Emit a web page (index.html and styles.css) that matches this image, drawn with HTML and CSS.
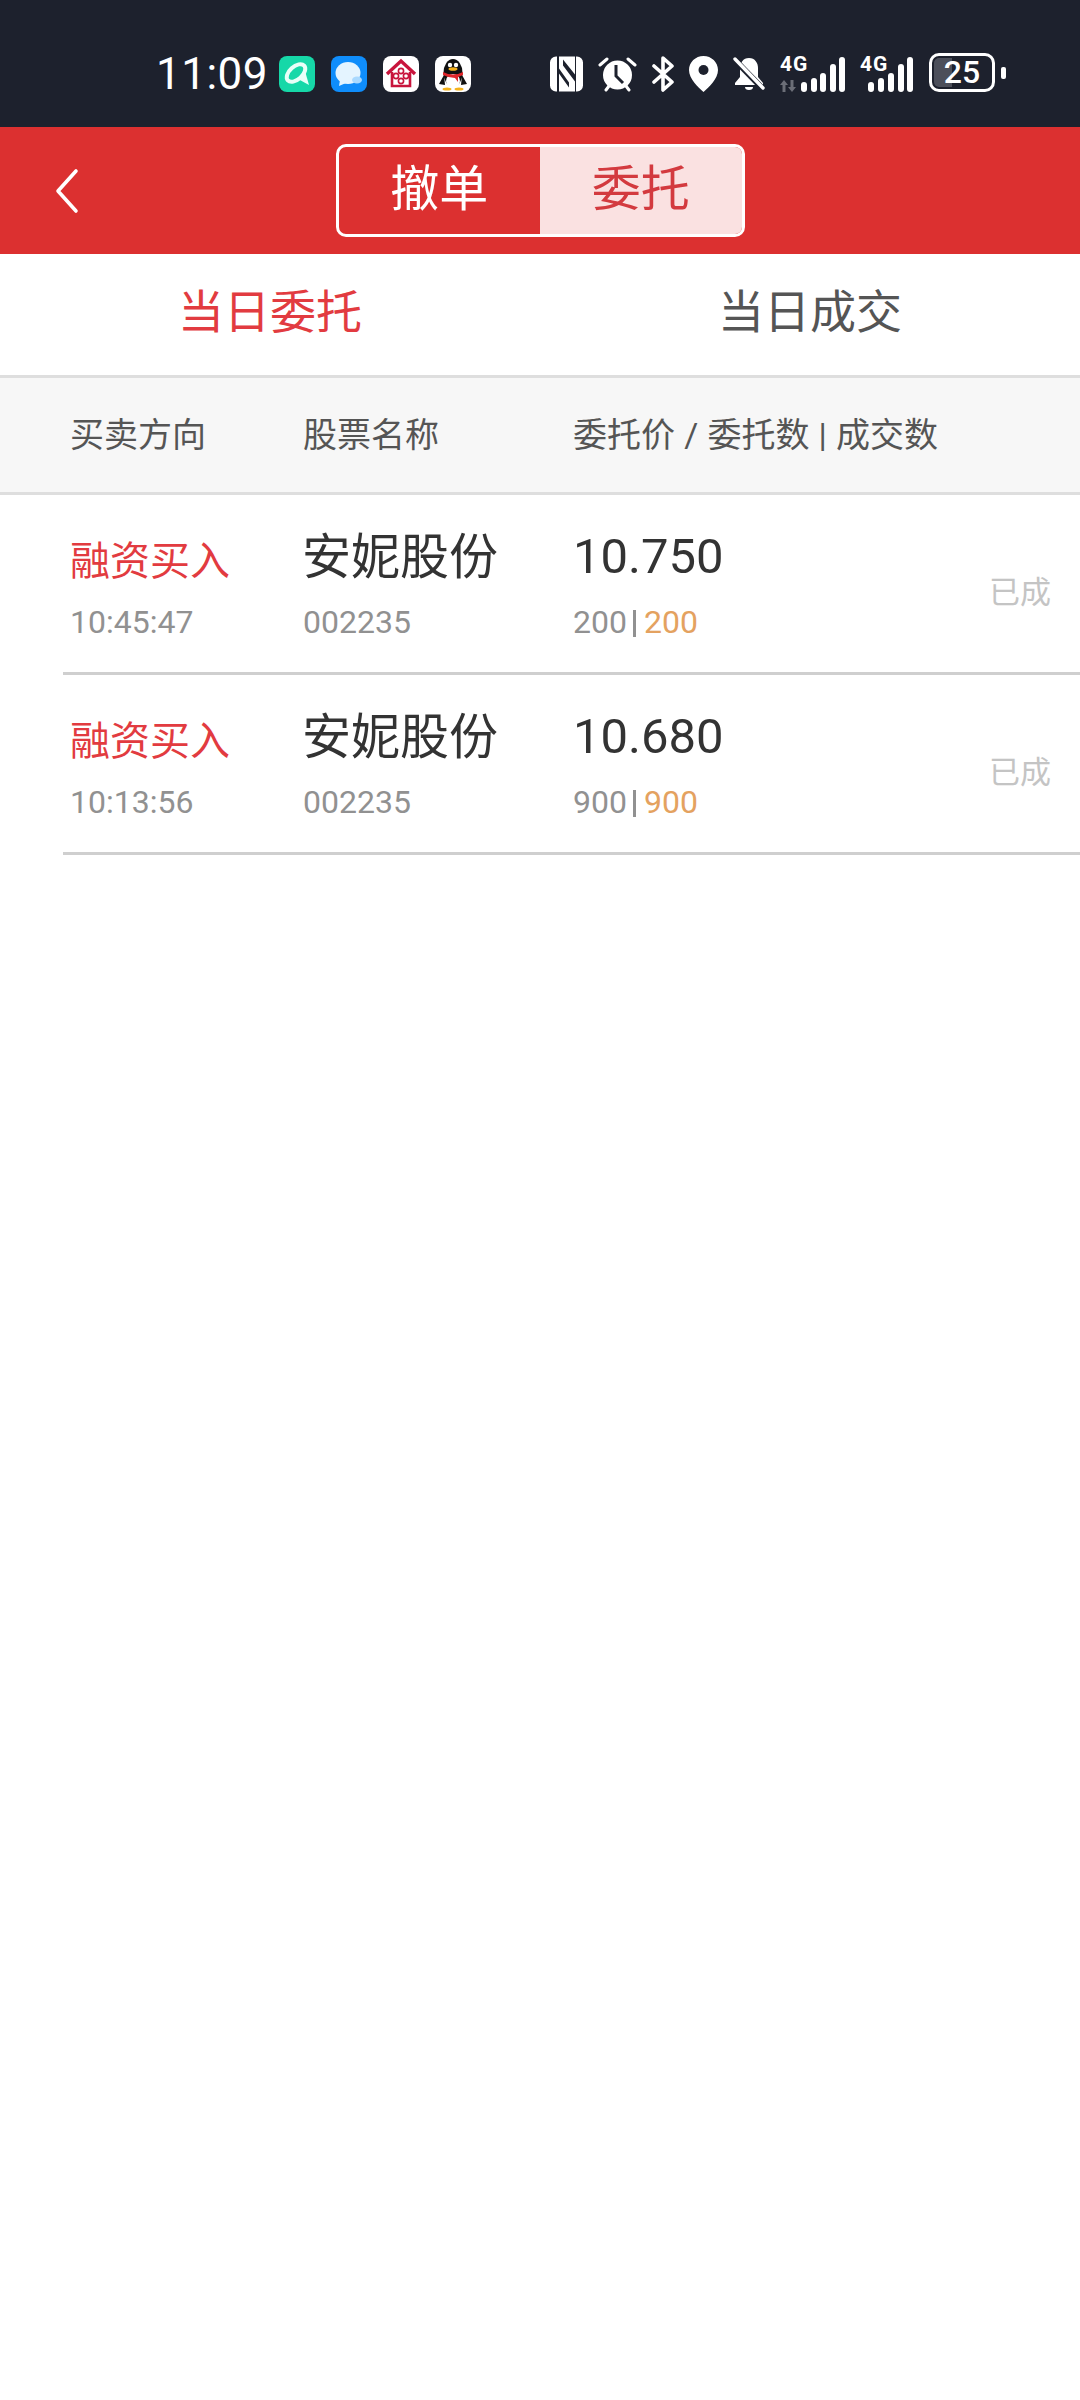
FILE: index.html
```html
<!DOCTYPE html>
<html lang="zh-CN">
<head>
  <meta charset="UTF-8" />
  <meta name="viewport" content="width=device-width, initial-scale=1.0"/>
  <title>委托</title>
  <link rel="stylesheet" href="styles.css">
</head>
<body>
  <!-- 状态栏 -->
  <div class="status-bar">
    <span class="clock">11:09</span>
    <div class="app-icons">
      <svg class="app-icon" viewBox="0 0 36 36">
        <rect width="36" height="36" rx="8" fill="#16d8a8"/>
        <ellipse cx="17" cy="17" rx="11" ry="6.500" fill="none" stroke="#e8fff8" stroke-width="4" transform="rotate(-42 17 17)"/>
        <path d="M19 23l7-8 4 14z" fill="#e8fff8"/>
      </svg>
      <svg class="app-icon" viewBox="0 0 36 36">
        <rect width="36" height="36" rx="8" fill="#0f8dfb"/>
        <ellipse cx="17" cy="17" rx="12.500" ry="11" fill="#e4f4ff"/>
        <path d="M9 24l-1 6 7-3z" fill="#e4f4ff"/>
        <ellipse cx="26" cy="24" rx="5" ry="3.500" fill="#a9d9ff"/>
      </svg>
      <svg class="app-icon" viewBox="0 0 36 36">
        <rect width="36" height="36" rx="8" fill="#fff"/>
        <path d="M4 18L18 5l14 13" fill="none" stroke="#c8143c" stroke-width="3.400"/>
        <path d="M9 16v14h18V16" fill="none" stroke="#c8143c" stroke-width="2.600"/>
        <circle cx="18" cy="15" r="2.600" fill="none" stroke="#c8143c" stroke-width="1.600"/>
        <circle cx="13" cy="20" r="2.600" fill="none" stroke="#c8143c" stroke-width="1.600"/>
        <circle cx="23" cy="20" r="2.600" fill="none" stroke="#c8143c" stroke-width="1.600"/>
        <circle cx="18" cy="25" r="2.600" fill="none" stroke="#c8143c" stroke-width="1.600"/>
      </svg>
      <svg class="app-icon" viewBox="0 0 36 36">
        <rect width="36" height="36" rx="8" fill="#fff"/>
        <ellipse cx="18" cy="17" rx="9.500" ry="14" fill="#111"/>
        <path d="M9 19l-5 9 6 1zM27 19l5 9-6 1z" fill="#111"/>
        <ellipse cx="18" cy="25" rx="7" ry="7" fill="#fff"/>
        <circle cx="15" cy="9" r="2.200" fill="#fff"/>
        <circle cx="21" cy="9" r="2.200" fill="#fff"/>
        <ellipse cx="18" cy="13" rx="4.500" ry="1.800" fill="#f5b21a"/>
        <path d="M8 16q10 5 20 0l0 3-5 2 0 5-3-4q-6 0-12-3z" fill="#e0262a"/>
        <ellipse cx="12" cy="33" rx="4.500" ry="1.600" fill="#f5b21a"/>
        <ellipse cx="24" cy="33" rx="4.500" ry="1.600" fill="#f5b21a"/>
      </svg>
    </div>
    <div class="sys-icons">
      <svg class="sys nfc" viewBox="0 0 33 35">
        <path d="M7 0v35H6a6 6 0 0 1-6-6V6a6 6 0 0 1 6-6zM26 0v35h1a6 6 0 0 0 6-6V6a6 6 0 0 0-6-6z" fill="#fff"/>
        <path d="M9 0h16v18L13 3v6l12 16v10H9V17l10 14v-5L9 12z" fill="#fff"/>
      </svg>
      <svg class="sys alarm" viewBox="0 0 39 36">
        <circle cx="19.500" cy="19" r="14.500" fill="#fff"/>
        <path d="M18 9v11l7 7" fill="none" stroke="#1d212d" stroke-width="3"/>
        <path d="M2 9l7-6M37 9l-7-6M8 34l3-4M31 34l-3-4" stroke="#fff" stroke-width="3" stroke-linecap="round"/>
      </svg>
      <svg class="sys bt" viewBox="0 0 24 36">
        <path d="M3 10l18 16-9 8V2l9 8L3 26" fill="none" stroke="#fff" stroke-width="3.600" stroke-linejoin="round" stroke-linecap="round"/>
      </svg>
      <svg class="sys pin" viewBox="0 0 29 36">
        <path d="M14.500 0C6.500 0 0 6.300 0 14c0 9 9 17 14.500 22C20 31 29 23 29 14 29 6.300 22.500 0 14.500 0z" fill="#fff"/>
        <circle cx="14.500" cy="14" r="5" fill="#1d212d"/>
      </svg>
      <svg class="sys bell" viewBox="0 0 32 36">
        <path d="M16 2c-6 0-9 5-9 10v9l-5 6v2h28v-2l-5-6v-9c0-5-3-10-9-10z" fill="#fff"/>
        <path d="M12 31h8a4 3 0 0 1-8 0z" fill="#fff"/>
        <path d="M0 2l30 31" stroke="#1d212d" stroke-width="6"/>
        <path d="M2 3l28 29" stroke="#fff" stroke-width="3.400" stroke-linecap="round"/>
      </svg>
      <div class="net net-first">
        <div class="net-tag">
          <span class="net-label">4G</span>
          <svg class="net-arrows" viewBox="0 0 16 12">
            <path d="M4 0l4 5H5.500v7h-3V5H0zM12 12L8 7h2.500V0h3v7H16z" fill="#6b6e77"/>
          </svg>
        </div>
        <svg class="bars" viewBox="0 0 44 36">
          <rect x="0" y="26" width="6" height="10" rx="3" fill="#fff"/>
          <rect x="10" y="22" width="6" height="14" rx="3" fill="#fff"/>
          <rect x="19" y="17" width="6" height="19" rx="3" fill="#fff"/>
          <rect x="29" y="8" width="6" height="28" rx="3" fill="#fff"/>
          <rect x="38" y="1" width="6" height="35" rx="3" fill="#fff"/>
        </svg>
      </div>
      <div class="net net-second">
        <span class="net-label">4G</span>
        <svg class="bars-small" viewBox="0 0 45 36">
          <rect x="0" y="26" width="6" height="10" rx="3" fill="#fff"/>
          <rect x="10" y="22" width="6" height="14" rx="3" fill="#fff"/>
          <rect x="20" y="17" width="6" height="19" rx="3" fill="#fff"/>
          <rect x="30" y="8" width="6" height="28" rx="3" fill="#fff"/>
          <rect x="39" y="1" width="6" height="35" rx="3" fill="#fff"/>
        </svg>
      </div>
      <div class="battery">
        <div class="battery-box">
          <div class="battery-fill"></div>
          <span class="battery-num">25</span>
        </div>
        <div class="battery-nub"></div>
      </div>
    </div>
  </div>

  <!-- 顶部导航 -->
  <div class="nav">
    <svg class="back" viewBox="0 0 26 46">
      <path d="M22 3L4 23l18 20" fill="none" stroke="#fff" stroke-width="3.600" stroke-linecap="round" stroke-linejoin="round"/>
    </svg>
    <div class="segment">
      <div class="seg-item seg-off">撤单</div>
      <div class="seg-item seg-on">委托</div>
    </div>
  </div>

  <div class="tabs">
    <div class="tab tab-active">当日委托</div>
    <div class="tab">当日成交</div>
  </div>

  <div class="table-head">
    <div class="col-dir">买卖方向</div>
    <div class="col-name">股票名称</div>
    <div class="col-price head-price">委托价 / 委托数 | 成交数</div>
  </div>

  <div class="order">
    <div class="col-dir">
      <div class="dir">融资买入</div>
      <div class="sub">10:45:47</div>
    </div>
    <div class="col-name">
      <div class="stock">安妮股份</div>
      <div class="sub">002235</div>
    </div>
    <div class="col-price">
      <div class="price">10.750</div>
      <div class="sub">200<i class="sep"></i><span class="deal">200</span></div>
    </div>
    <div class="state">已成</div>
  </div>

  <div class="order">
    <div class="col-dir">
      <div class="dir">融资买入</div>
      <div class="sub">10:13:56</div>
    </div>
    <div class="col-name">
      <div class="stock">安妮股份</div>
      <div class="sub">002235</div>
    </div>
    <div class="col-price">
      <div class="price">10.680</div>
      <div class="sub">900<i class="sep"></i><span class="deal">900</span></div>
    </div>
    <div class="state">已成</div>
  </div>
</body>
</html>
```

FILE: styles.css
```css
body, html {
  margin: 0;
  padding: 0;
  height: 100%;
  background: #fff;
  font-family: Roboto, "Noto Sans CJK SC", sans-serif;
  color: #333;
}

.status-bar {
  height: 127px;
  box-sizing: border-box;
  padding: 20px 0 0 156px;
  background: #1d212d;
  color: #fff;
  display: flex;
  align-items: center;
}

.clock {
  width: 123px;
  font-size: 44px;
  line-height: 36px;
  letter-spacing: 0.5px;
}

.app-icons {
  display: flex;
  gap: 16px;
}

.app-icon {
  width: 36px;
  height: 36px;
  display: block;
}

.sys-icons {
  display: flex;
  align-items: center;
  margin-left: 79px;
}

.sys {
  display: block;
  height: 36px;
}

.nfc { width: 33px; margin-right: 15px; }
.alarm { width: 39px; margin-right: 14px; }
.bt { width: 24px; margin-right: 14px; }
.pin { width: 29px; margin-right: 15px; }
.bell { width: 32px; margin-right: 15px; }

.net {
  display: flex;
  align-items: flex-end;
  height: 36px;
  position: relative;
}

.net-first { width: 65px; margin-right: 15px; }
.net-second { width: 53px; margin-right: 16px; padding-left: 8px; box-sizing: border-box; }

.net-label {
  font-size: 21px;
  line-height: 16px;
  font-weight: 700;
  letter-spacing: 1px;
}

.net-tag {
  width: 21px;
  height: 36px;
  display: flex;
  flex-direction: column;
  justify-content: space-between;
}

.net-arrows {
  width: 16px;
  height: 12px;
}

.bars {
  width: 44px;
  height: 36px;
}

.net-second .net-label {
  position: absolute;
  left: 0;
  top: 0;
}

.bars-small {
  width: 45px;
  height: 36px;
}

.battery {
  display: flex;
  align-items: center;
  gap: 6px;
  margin-top: -2px;
}

.battery-box {
  width: 66px;
  height: 39px;
  box-sizing: border-box;
  border: 3px solid #fff;
  border-radius: 10px;
  position: relative;
  display: flex;
  align-items: center;
  justify-content: center;
}

.battery-fill {
  position: absolute;
  left: 2px;
  top: 2px;
  bottom: 2px;
  width: 18px;
  border-radius: 5px 0 0 5px;
  background: #4c4f5a;
}

.battery-num {
  position: relative;
  font-size: 32px;
  line-height: 33px;
  font-weight: 500;
}

.battery-nub {
  width: 5px;
  height: 12px;
  border-radius: 2px;
  background: #fff;
}

.nav {
  height: 127px;
  background: #dc3030;
  position: relative;
  display: flex;
  align-items: center;
  justify-content: center;
}

.back {
  position: absolute;
  left: 54px;
  top: 41px;
  width: 26px;
  height: 46px;
}

.segment {
  width: 409px;
  height: 93px;
  box-sizing: border-box;
  border: 3px solid #fff;
  border-radius: 10px;
  overflow: hidden;
  display: flex;
  margin-top: -1px;
}

.seg-item {
  width: 50%;
  text-align: center;
  font-size: 49px;
  line-height: 76px;
  font-family: "Noto Sans CJK SC", sans-serif;
}

.seg-off {
  color: #fff;
}

.seg-on {
  background: #fae1e1;
  color: #d33a3f;
}

.tabs {
  height: 121px;
  box-sizing: border-box;
  display: flex;
}

.tab {
  width: 50%;
  text-align: center;
  font-size: 46px;
  line-height: 108px;
  color: #555;
  font-family: "Noto Sans CJK SC", sans-serif;
}

.tab-active {
  color: #e23b40;
}

.table-head {
  height: 120px;
  box-sizing: border-box;
  border-top: 3px solid #dedede;
  border-bottom: 3px solid #dedede;
  background: #f7f7f7;
  display: flex;
  align-items: center;
  padding: 0 0 6px 70px;
  font-size: 34px;
  color: #555;
}

.col-dir {
  width: 233px;
}

.col-name {
  width: 270px;
}

.col-price {
  flex: 1;
}

.head-price {
  word-spacing: 0.75px;
}

.order {
  height: 180px;
  box-sizing: border-box;
  margin-left: 63px;
  padding: 6px 0 3px 7px;
  border-bottom: 3px solid #cfcfcf;
  display: flex;
  align-items: center;
  position: relative;
}

.dir {
  font-size: 40px;
  line-height: 62px;
  margin-bottom: -2px;
  color: #e23b40;
  font-family: "Noto Sans CJK SC", sans-serif;
}

.stock {
  font-size: 49px;
  line-height: 52px;
  padding-bottom: 8px;
  margin-left: -1px;
  color: #333;
  font-family: "Noto Sans CJK SC", sans-serif;
}

.price {
  font-size: 49px;
  line-height: 60px;
  color: #333;
}

.sub {
  font-size: 32px;
  line-height: 42px;
  margin-top: 14px;
  color: #919191;
}

.sep {
  display: inline-block;
  width: 3px;
  height: 27px;
  margin: 0 8px 0 6px;
  vertical-align: -4px;
  background: #919191;
}

.deal {
  color: #e4a260;
}

.state {
  position: absolute;
  right: 29px;
  top: 73px;
  font-size: 31px;
  line-height: 44px;
  color: #c4c4c4;
  font-family: "Noto Sans CJK SC", sans-serif;
}
```
